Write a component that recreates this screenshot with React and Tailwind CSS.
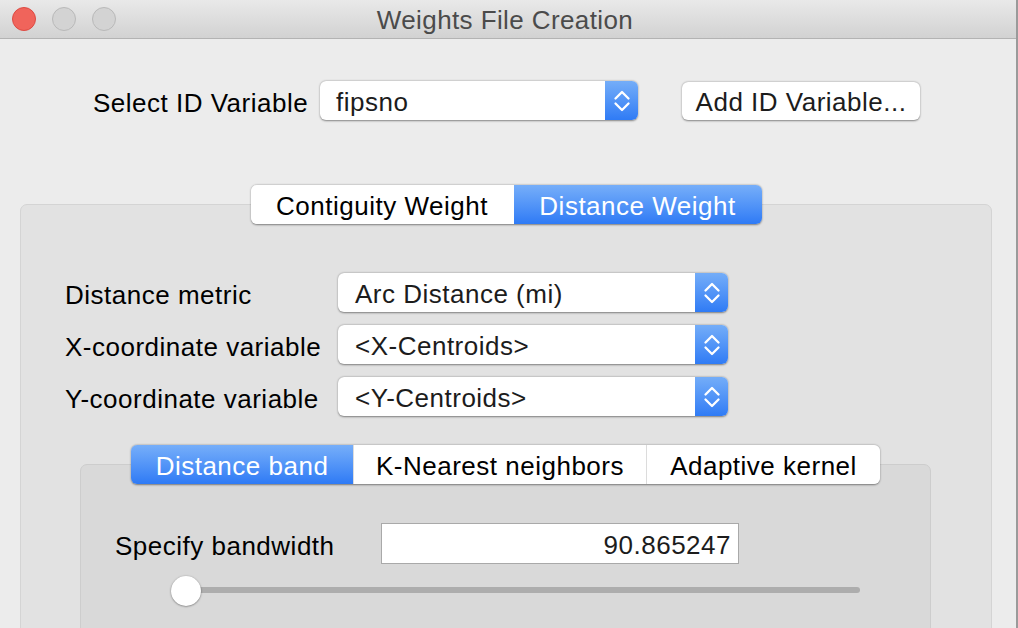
import React from "react";

const font = { fontFamily: '"Liberation Sans", Arial, sans-serif' };

const Chevrons = () => (
  <svg width="18" height="28" viewBox="0 0 18 28" fill="none">
    <path d="M2.5 11.5 L9 5 L15.5 11.5" stroke="white" strokeWidth="2.3" strokeLinecap="round" strokeLinejoin="round" />
    <path d="M2.5 16.5 L9 23 L15.5 16.5" stroke="white" strokeWidth="2.3" strokeLinecap="round" strokeLinejoin="round" />
  </svg>
);

const Select = ({ value, width, pad = "pl-[17px]" }) => (
  <div
    className={`flex h-[39px] items-stretch rounded-[6px] bg-white shadow-[0_0.5px_2px_rgba(0,0,0,0.45)] ${width}`}
  >
    <div className={`flex flex-1 items-center pt-[3px] text-[26px] leading-[30px] tracking-[0.5px] text-[#1c1c1c] ${pad}`}>
      {value}
    </div>
    <div className="flex w-[33px] items-center justify-center rounded-r-[6px] bg-gradient-to-b from-[#74adf8] to-[#2f7bf5]">
      <Chevrons />
    </div>
  </div>
);

const Tab = ({ label, active, width, first, last }) => (
  <div
    className={`flex h-[39px] items-center justify-center pt-[2px] text-[26px] leading-[30px] tracking-[0.5px] ${width} ${
      active ? "bg-gradient-to-b from-[#76aef9] to-[#2e7af5] text-white" : "bg-white text-black"
    } ${first ? "rounded-l-[6px]" : ""} ${last ? "rounded-r-[6px]" : ""} ${
      !first && !active ? "border-l border-[#dcdcdc]" : ""
    }`}
  >
    {label}
  </div>
);

const Tabs = ({ items }) => (
  <div className="relative z-10 flex justify-center">
    <div className="flex rounded-[6px] shadow-[0_0.5px_2px_rgba(0,0,0,0.45)]">
      {items.map((t, i) => (
        <Tab key={t.label} {...t} first={i === 0} last={i === items.length - 1} />
      ))}
    </div>
  </div>
);

const Row = ({ label, value }) => (
  <div className="flex items-center">
    <div className="w-[273px] pt-[5px] text-[26px] leading-[30px] tracking-[0.5px] text-black">{label}</div>
    <Select value={value} width="w-[390px]" />
  </div>
);

export default function App() {
  return (
    <div className="flex h-[628px] w-[1018px] overflow-hidden bg-[#9a9a9a]" style={font}>
      <div className="flex h-full w-[1016px] flex-col bg-[#ececec]">
        {/* title bar */}
        <div className="relative flex h-[39px] shrink-0 items-center border-b border-[#b3b3b3] bg-gradient-to-b from-[#e9e9e9] to-[#d2d2d2]">
          <div className="flex items-center gap-[16px] pl-[12px]">
            <div className="h-[24px] w-[24px] rounded-full border border-[#dd4a42] bg-[#f0645b]" />
            <div className="h-[24px] w-[24px] rounded-full border border-[#b9b9b9] bg-[#d3d3d3]" />
            <div className="h-[24px] w-[24px] rounded-full border border-[#b9b9b9] bg-[#d3d3d3]" />
          </div>
          <div className="flex-1 pr-[122px] pt-[1px] text-center text-[26px] leading-[30px] tracking-[0.4px] text-[#4b4b4b]">
            Weights File Creation
          </div>
        </div>

        {/* id variable row */}
        <div className="mt-[42px] flex items-center pl-[93px]">
          <div className="w-[227px] pt-[4px] text-[26px] leading-[30px] tracking-[0.5px] text-black">Select ID Variable</div>
          <Select value="fipsno" width="w-[318px]" pad="pl-[16px]" />
          <div className="ml-[44px] flex h-[38px] w-[238px] items-center justify-center rounded-[6px] bg-white pt-[3px] text-[26px] leading-[30px] tracking-[0.5px] text-[#1c1c1c] shadow-[0_0.5px_2px_rgba(0,0,0,0.45)]">
            Add ID Variable...
          </div>
        </div>

        {/* outer group */}
        <div className="ml-[20px] mt-[65px] w-[972px]">
          <Tabs
            items={[
              { label: "Contiguity Weight", width: "w-[263px]" },
              { label: "Distance Weight", width: "w-[248px]", active: true },
            ]}
          />
          <div className="-mt-[20px] h-[440px] rounded-[7px] border border-[#d4d4d4] bg-[#e2e2e2] pl-[44px] pt-[68px]">
            <div className="flex flex-col gap-[13px]">
              <Row label="Distance metric" value="Arc Distance (mi)" />
              <Row label="X-coordinate variable" value="<X-Centroids>" />
              <Row label="Y-coordinate variable" value="<Y-Centroids>" />
            </div>

            {/* inner group */}
            <div className="ml-[15px] mt-[29px] w-[851px]">
              <Tabs
                items={[
                  { label: "Distance band", width: "w-[222px]", active: true },
                  { label: "K-Nearest neighbors", width: "w-[293px]" },
                  { label: "Adaptive kernel", width: "w-[234px]" },
                ]}
              />
              <div className="-mt-[20px] h-[200px] rounded-[7px] border border-[#cdcdcd] bg-[#d9d9d9] pl-[34px] pt-[58px]">
                <div className="flex items-center">
                  <div className="w-[266px] pt-[4px] text-[26px] leading-[30px] tracking-[0.5px] text-black">Specify bandwidth</div>
                  <div className="flex h-[41px] w-[358px] items-center justify-end border border-[#a9a9a9] bg-white pr-[7px] pt-[3px] text-[26px] leading-[30px] tracking-[0.5px] text-[#1c1c1c]">
                    90.865247
                  </div>
                </div>
                <div className="relative ml-[56px] mt-[12px] h-[30px] w-[689px]">
                  <div className="absolute left-[1px] right-0 top-[11px] h-[6px] rounded-full bg-[#adadad]" />
                  <div className="absolute left-0 top-0 h-[30px] w-[30px] rounded-full bg-white shadow-[0_0.5px_2px_rgba(0,0,0,0.5)]" />
                </div>
              </div>
            </div>
          </div>
        </div>
      </div>
    </div>
  );
}
